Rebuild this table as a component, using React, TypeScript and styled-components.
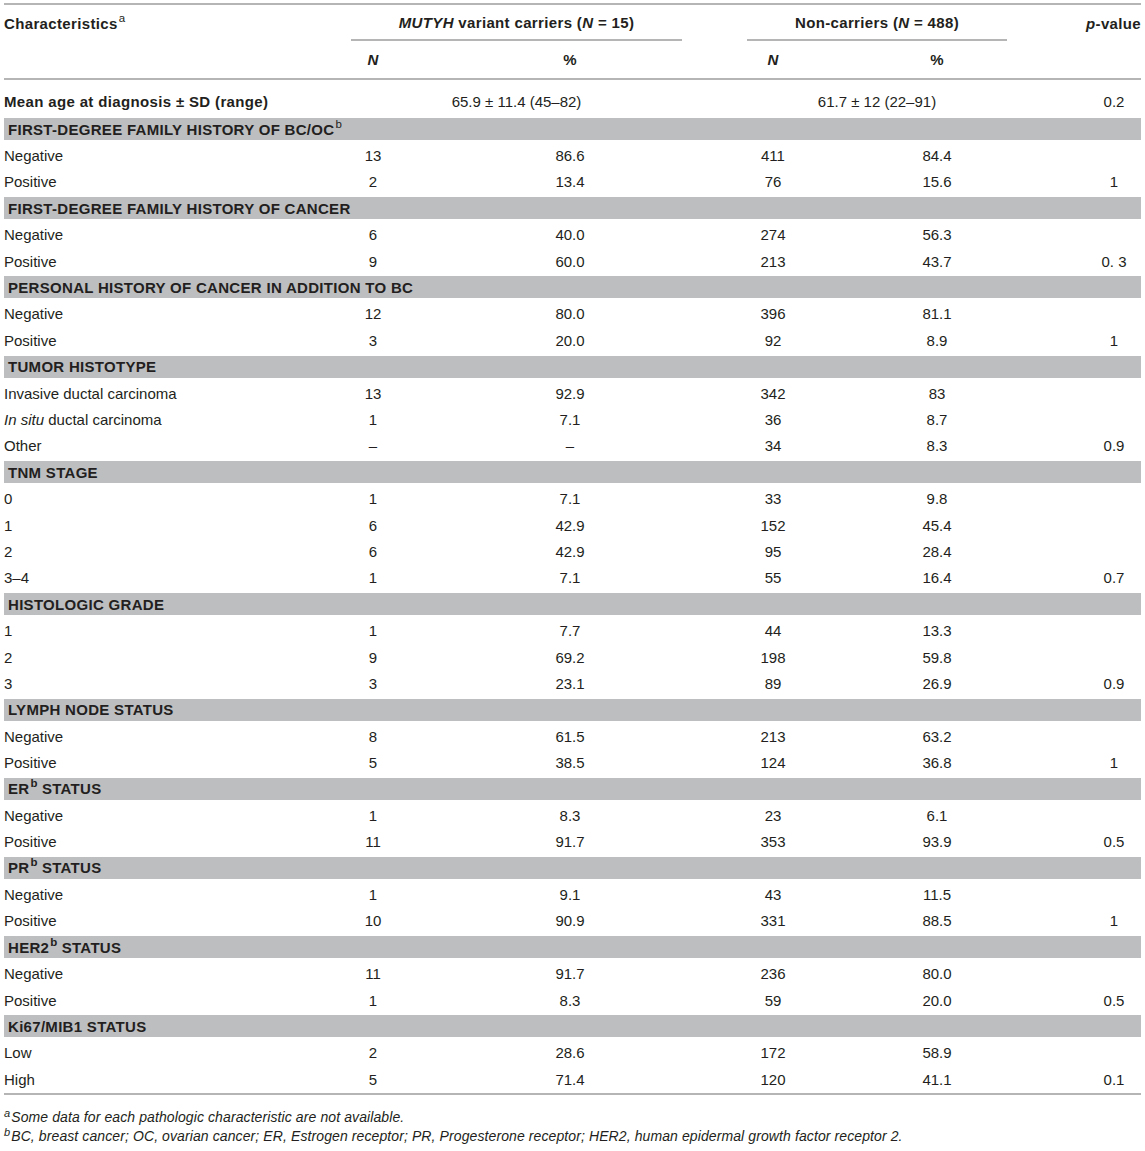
import * as React from "react";
import styled, { createGlobalStyle } from "styled-components";

const GlobalStyle = createGlobalStyle`
  html, body {
    margin: 0;
    padding: 0;
    background: #fff;
  }
  body {
    font-family: "Liberation Sans", Arial, Helvetica, sans-serif;
    color: #231f20;
  }
`;

// column grid shared by every table row
const COLS = "347px 44px 63px 224px 65px 52px 68px 140px 134px";
const RULE = "#b5b5b5";
const BAND = "#bdbec0";

const Page = styled.div`
  padding: 3px 4px 0 4px;
  width: 1137px;
`;

const Table = styled.div`
  border-top: 2px solid ${RULE};
  border-bottom: 2px solid ${RULE};
  padding-bottom: 1px;
`;

const Row = styled.div<{ $h: number; $pad?: number; $rule?: boolean }>`
  display: grid;
  grid-template-columns: ${COLS};
  height: ${(p) => p.$h}px;
  padding-top: ${(p) => p.$pad || 0}px;
  box-sizing: border-box;
  align-items: center;
  font-size: 15px;
  border-bottom: ${(p) => (p.$rule ? `2px solid ${RULE}` : "none")};
`;

const Cell = styled.div<{ $col: string; $align?: string; $bold?: boolean; $rule?: boolean; $padL?: number }>`
  grid-column: ${(p) => p.$col};
  text-align: ${(p) => p.$align || "center"};
  font-weight: ${(p) => (p.$bold ? 700 : 400)};
  letter-spacing: ${(p) => (p.$bold ? "0.35px" : "0")};
  white-space: nowrap;
  padding-left: ${(p) => p.$padL || 0}px;
  ${(p) =>
    p.$rule &&
    `
    align-self: stretch;
    display: flex;
    align-items: center;
    justify-content: center;
    border-bottom: 2px solid ${RULE};
  `}
`;

const Section = styled.div`
  height: 26.4px;
  box-sizing: border-box;
  padding: 2px 0 2.4px 0;
  display: flex;
`;

const Band = styled.div`
  flex: 1;
  background: ${BAND};
  display: flex;
  align-items: center;
  padding-left: 4px;
  font-size: 15px;
  font-weight: 700;
  letter-spacing: 0.3px;
  white-space: nowrap;
`;

const Sup = styled.sup<{ $bold?: boolean }>`
  font-size: 11.5px;
  font-weight: ${(p) => (p.$bold ? 700 : 400)};
  letter-spacing: 0;
  vertical-align: 0;
  position: relative;
  top: -7px;
  margin-left: 1px;
`;

const Notes = styled.div`
  margin-top: 13px;
  font-size: 14px;
  letter-spacing: 0.1px;
  line-height: 18px;
  font-style: italic;
  white-space: nowrap;
`;

const NoteSup = styled.span`
  font-size: 11px;
  position: relative;
  top: -5px;
  margin-right: 1px;
`;

type DataRow = {
  label: React.ReactNode;
  n1: string;
  p1: string;
  n2: string;
  p2: string;
  pv?: string;
};

type Group = { title: React.ReactNode; rows: DataRow[] };

const groups: Group[] = [
  {
    title: (
      <>
        FIRST-DEGREE FAMILY HISTORY OF BC/OC<Sup>b</Sup>
      </>
    ),
    rows: [
      { label: "Negative", n1: "13", p1: "86.6", n2: "411", p2: "84.4" },
      { label: "Positive", n1: "2", p1: "13.4", n2: "76", p2: "15.6", pv: "1" },
    ],
  },
  {
    title: "FIRST-DEGREE FAMILY HISTORY OF CANCER",
    rows: [
      { label: "Negative", n1: "6", p1: "40.0", n2: "274", p2: "56.3" },
      { label: "Positive", n1: "9", p1: "60.0", n2: "213", p2: "43.7", pv: "0. 3" },
    ],
  },
  {
    title: "PERSONAL HISTORY OF CANCER IN ADDITION TO BC",
    rows: [
      { label: "Negative", n1: "12", p1: "80.0", n2: "396", p2: "81.1" },
      { label: "Positive", n1: "3", p1: "20.0", n2: "92", p2: "8.9", pv: "1" },
    ],
  },
  {
    title: "TUMOR HISTOTYPE",
    rows: [
      { label: "Invasive ductal carcinoma", n1: "13", p1: "92.9", n2: "342", p2: "83" },
      {
        label: (
          <>
            <i>In situ</i> ductal carcinoma
          </>
        ),
        n1: "1",
        p1: "7.1",
        n2: "36",
        p2: "8.7",
      },
      { label: "Other", n1: "–", p1: "–", n2: "34", p2: "8.3", pv: "0.9" },
    ],
  },
  {
    title: "TNM STAGE",
    rows: [
      { label: "0", n1: "1", p1: "7.1", n2: "33", p2: "9.8" },
      { label: "1", n1: "6", p1: "42.9", n2: "152", p2: "45.4" },
      { label: "2", n1: "6", p1: "42.9", n2: "95", p2: "28.4" },
      { label: "3–4", n1: "1", p1: "7.1", n2: "55", p2: "16.4", pv: "0.7" },
    ],
  },
  {
    title: "HISTOLOGIC GRADE",
    rows: [
      { label: "1", n1: "1", p1: "7.7", n2: "44", p2: "13.3" },
      { label: "2", n1: "9", p1: "69.2", n2: "198", p2: "59.8" },
      { label: "3", n1: "3", p1: "23.1", n2: "89", p2: "26.9", pv: "0.9" },
    ],
  },
  {
    title: "LYMPH NODE STATUS",
    rows: [
      { label: "Negative", n1: "8", p1: "61.5", n2: "213", p2: "63.2" },
      { label: "Positive", n1: "5", p1: "38.5", n2: "124", p2: "36.8", pv: "1" },
    ],
  },
  {
    title: (
      <>
        ER<Sup $bold>b</Sup> STATUS
      </>
    ),
    rows: [
      { label: "Negative", n1: "1", p1: "8.3", n2: "23", p2: "6.1" },
      { label: "Positive", n1: "11", p1: "91.7", n2: "353", p2: "93.9", pv: "0.5" },
    ],
  },
  {
    title: (
      <>
        PR<Sup $bold>b</Sup> STATUS
      </>
    ),
    rows: [
      { label: "Negative", n1: "1", p1: "9.1", n2: "43", p2: "11.5" },
      { label: "Positive", n1: "10", p1: "90.9", n2: "331", p2: "88.5", pv: "1" },
    ],
  },
  {
    title: (
      <>
        HER2<Sup $bold>b</Sup> STATUS
      </>
    ),
    rows: [
      { label: "Negative", n1: "11", p1: "91.7", n2: "236", p2: "80.0" },
      { label: "Positive", n1: "1", p1: "8.3", n2: "59", p2: "20.0", pv: "0.5" },
    ],
  },
  {
    title: "Ki67/MIB1 STATUS",
    rows: [
      { label: "Low", n1: "2", p1: "28.6", n2: "172", p2: "58.9" },
      { label: "High", n1: "5", p1: "71.4", n2: "120", p2: "41.1", pv: "0.1" },
    ],
  },
];

const App: React.FC = () => {
  return (
    <Page>
      <GlobalStyle />
      <Table>
        <Row $h={36}>
          <Cell $col="1" $align="left" $bold>
            Characteristics<Sup>a</Sup>
          </Cell>
          <Cell $col="2 / 5" $bold $rule>
            <span>
              <i>MUTYH</i> variant carriers (<i>N</i> = 15)
            </span>
          </Cell>
          <Cell $col="6 / 9" $bold $rule>
            <span>
              Non-carriers (<i>N</i> = 488)
            </span>
          </Cell>
          <Cell $col="9" $align="right" $bold>
            <i>p</i>-value
          </Cell>
        </Row>
        <Row $h={39} $rule>
          <Cell $col="2" $bold>
            <i>N</i>
          </Cell>
          <Cell $col="4" $bold>
            %
          </Cell>
          <Cell $col="6" $bold>
            <i>N</i>
          </Cell>
          <Cell $col="8" $bold>
            %
          </Cell>
        </Row>
        <Row $h={36} $pad={6}>
          <Cell $col="1" $align="left" $bold>
            Mean age at diagnosis ± SD (range)
          </Cell>
          <Cell $col="2 / 5">65.9 ± 11.4 (45–82)</Cell>
          <Cell $col="6 / 9">61.7 ± 12 (22–91)</Cell>
          <Cell $col="9" $padL={80}>
            0.2
          </Cell>
        </Row>
        {groups.map((g, gi) => (
          <React.Fragment key={gi}>
            <Section>
              <Band>
                <span>{g.title}</span>
              </Band>
            </Section>
            {g.rows.map((r, ri) => (
              <Row $h={26.4} key={ri}>
                <Cell $col="1" $align="left">
                  {r.label}
                </Cell>
                <Cell $col="2">{r.n1}</Cell>
                <Cell $col="4">{r.p1}</Cell>
                <Cell $col="6">{r.n2}</Cell>
                <Cell $col="8">{r.p2}</Cell>
                <Cell $col="9" $padL={80}>
                  {r.pv || ""}
                </Cell>
              </Row>
            ))}
          </React.Fragment>
        ))}
      </Table>
      <Notes>
        <div>
          <NoteSup>a</NoteSup>Some data for each pathologic characteristic are not available.
        </div>
        <div>
          <NoteSup>b</NoteSup>BC, breast cancer; OC, ovarian cancer; ER, Estrogen receptor; PR, Progesterone
          receptor; HER2, human epidermal growth factor receptor 2.
        </div>
      </Notes>
    </Page>
  );
};

export default App;
